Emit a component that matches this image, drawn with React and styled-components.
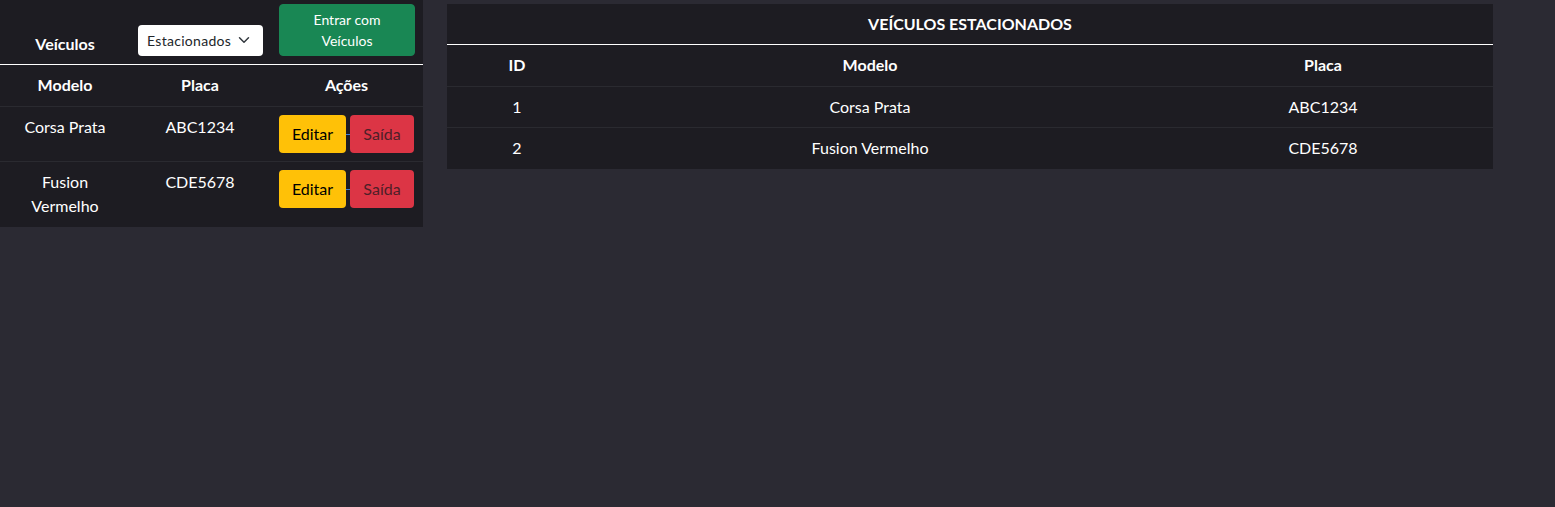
import React from "react";
import styled, { createGlobalStyle } from "styled-components";

const GlobalStyle = createGlobalStyle`
  html, body {
    margin: 0;
    padding: 0;
    background: #2b2a33;
    font-family: Lato, "Noto Sans", sans-serif;
    color: #ffffff;
  }
`;

const Page = styled.div`
  display: flex;
  align-items: flex-start;
  gap: 24px;
  min-height: 507px;
`;

const LeftPanel = styled.table`
  width: 423px;
  border-collapse: separate;
  border-spacing: 0;
  background: #1d1c22;
  table-layout: fixed;
`;

const RightPanel = styled.table`
  width: 1046px;
  margin-top: 4px;
  border-collapse: separate;
  border-spacing: 0;
  background: #1d1c22;
  table-layout: fixed;
`;

const TopCell = styled.th`
  padding: 4px 8px 8px;
  vertical-align: bottom;
  text-align: center;
  font-size: 16px;
  line-height: 24px;
  font-weight: 700;
  border-bottom: 1px solid #ffffff;
`;

const TitleCell = styled.th`
  padding: 8px;
  text-align: center;
  font-size: 16px;
  line-height: 24px;
  font-weight: 700;
  border-bottom: 1px solid #ffffff;
`;

const HeadCell = styled.th`
  padding: 8px 8px 9px;
  text-align: center;
  font-size: 16px;
  line-height: 24px;
  font-weight: 700;
  border-bottom: 1px solid #2a2a30;
`;

const Cell = styled.td`
  padding: 8px;
  vertical-align: top;
  text-align: center;
  font-size: 16px;
  line-height: 24px;
  white-space: ${({ $nowrap }) => ($nowrap ? "nowrap" : "normal")};
  border-bottom: ${({ $last }) => ($last ? "1px solid transparent" : "1px solid #2a2a30")};
`;

const SelectBox = styled.div`
  position: relative;
  box-sizing: border-box;
  width: 125px;
  height: 31px;
  margin: 0 auto;
  padding: 4px 34px 4px 9px;
  background: #ffffff;
  border-radius: 4px;
  color: #212529;
  font-size: 14px;
  line-height: 23px;
  font-weight: 400;
  text-align: left;
  overflow: hidden;
  white-space: nowrap;
  letter-spacing: 0.3px;
`;

const Chevron = styled.svg`
  position: absolute;
  right: 13px;
  top: 9px;
`;

const GreenButton = styled.button`
  box-sizing: border-box;
  width: 136px;
  padding: 4px 8px;
  border: 1px solid #198754;
  border-radius: 4px;
  background: #198754;
  color: #ffffff;
  font-family: inherit;
  font-size: 14px;
  line-height: 21px;
  display: block;
  margin-left: 1px;
`;

const Actions = styled.div`
  display: flex;
  align-items: center;
  padding-left: 1px;
`;

const ActionButton = styled.button`
  box-sizing: border-box;
  height: 38px;
  width: ${({ $w }) => $w}px;
  padding: 6px 12px;
  border: none;
  border-radius: 4px;
  background: ${({ $bg }) => $bg};
  color: ${({ $fg }) => $fg};
  font-family: inherit;
  font-size: 16px;
  line-height: 24px;
`;

const LinkGap = styled.span`
  width: 4px;
  height: 1px;
  margin-top: 1px;
  background: #3d7dd8;
`;

const leftCars = [
  { modelo: "Corsa Prata", placa: "ABC1234" },
  { modelo: "Fusion Vermelho", placa: "CDE5678" },
];

const parked = [
  { id: 1, modelo: "Corsa Prata", placa: "ABC1234" },
  { id: 2, modelo: "Fusion Vermelho", placa: "CDE5678" },
];

export default function App() {
  return (
    <>
      <GlobalStyle />
      <Page>
        <LeftPanel>
          <colgroup>
            <col style={{ width: 130 }} />
            <col style={{ width: 140 }} />
            <col style={{ width: 153 }} />
          </colgroup>
          <thead>
            <tr>
              <TopCell>Veículos</TopCell>
              <TopCell>
                <SelectBox>
                  Estacionados
                  <Chevron width="12" height="12" viewBox="0 0 16 16">
                    <path
                      d="M2 5l6 6 6-6"
                      fill="none"
                      stroke="#343a40"
                      strokeWidth="2"
                      strokeLinecap="round"
                      strokeLinejoin="round"
                    />
                  </Chevron>
                </SelectBox>
              </TopCell>
              <TopCell>
                <GreenButton>
                  Entrar com
                  <br />
                  Veículos
                </GreenButton>
              </TopCell>
            </tr>
            <tr>
              <HeadCell>Modelo</HeadCell>
              <HeadCell>Placa</HeadCell>
              <HeadCell>Ações</HeadCell>
            </tr>
          </thead>
          <tbody>
            {leftCars.map((car, i) => {
              const last = i === leftCars.length - 1;
              return (
                <tr key={car.placa}>
                  <Cell $last={last}>{car.modelo}</Cell>
                  <Cell $last={last}>{car.placa}</Cell>
                  <Cell $last={last}>
                    <Actions>
                      <ActionButton $w={67} $bg="#ffc107" $fg="#000000">
                        Editar
                      </ActionButton>
                      <LinkGap />
                      <ActionButton $w={64} $bg="#dc3545" $fg="#4e1f28">
                        Saída
                      </ActionButton>
                    </Actions>
                  </Cell>
                </tr>
              );
            })}
          </tbody>
        </LeftPanel>

        <RightPanel>
          <colgroup>
            <col style={{ width: 140 }} />
            <col style={{ width: 566 }} />
            <col style={{ width: 340 }} />
          </colgroup>
          <thead>
            <tr>
              <TitleCell colSpan={3}>VEÍCULOS ESTACIONADOS</TitleCell>
            </tr>
            <tr>
              <HeadCell>ID</HeadCell>
              <HeadCell>Modelo</HeadCell>
              <HeadCell>Placa</HeadCell>
            </tr>
          </thead>
          <tbody>
            {parked.map((car, i) => {
              const last = i === parked.length - 1;
              return (
                <tr key={car.id}>
                  <Cell $nowrap $last={last}>{car.id}</Cell>
                  <Cell $nowrap $last={last}>{car.modelo}</Cell>
                  <Cell $nowrap $last={last}>{car.placa}</Cell>
                </tr>
              );
            })}
          </tbody>
        </RightPanel>
      </Page>
    </>
  );
}
